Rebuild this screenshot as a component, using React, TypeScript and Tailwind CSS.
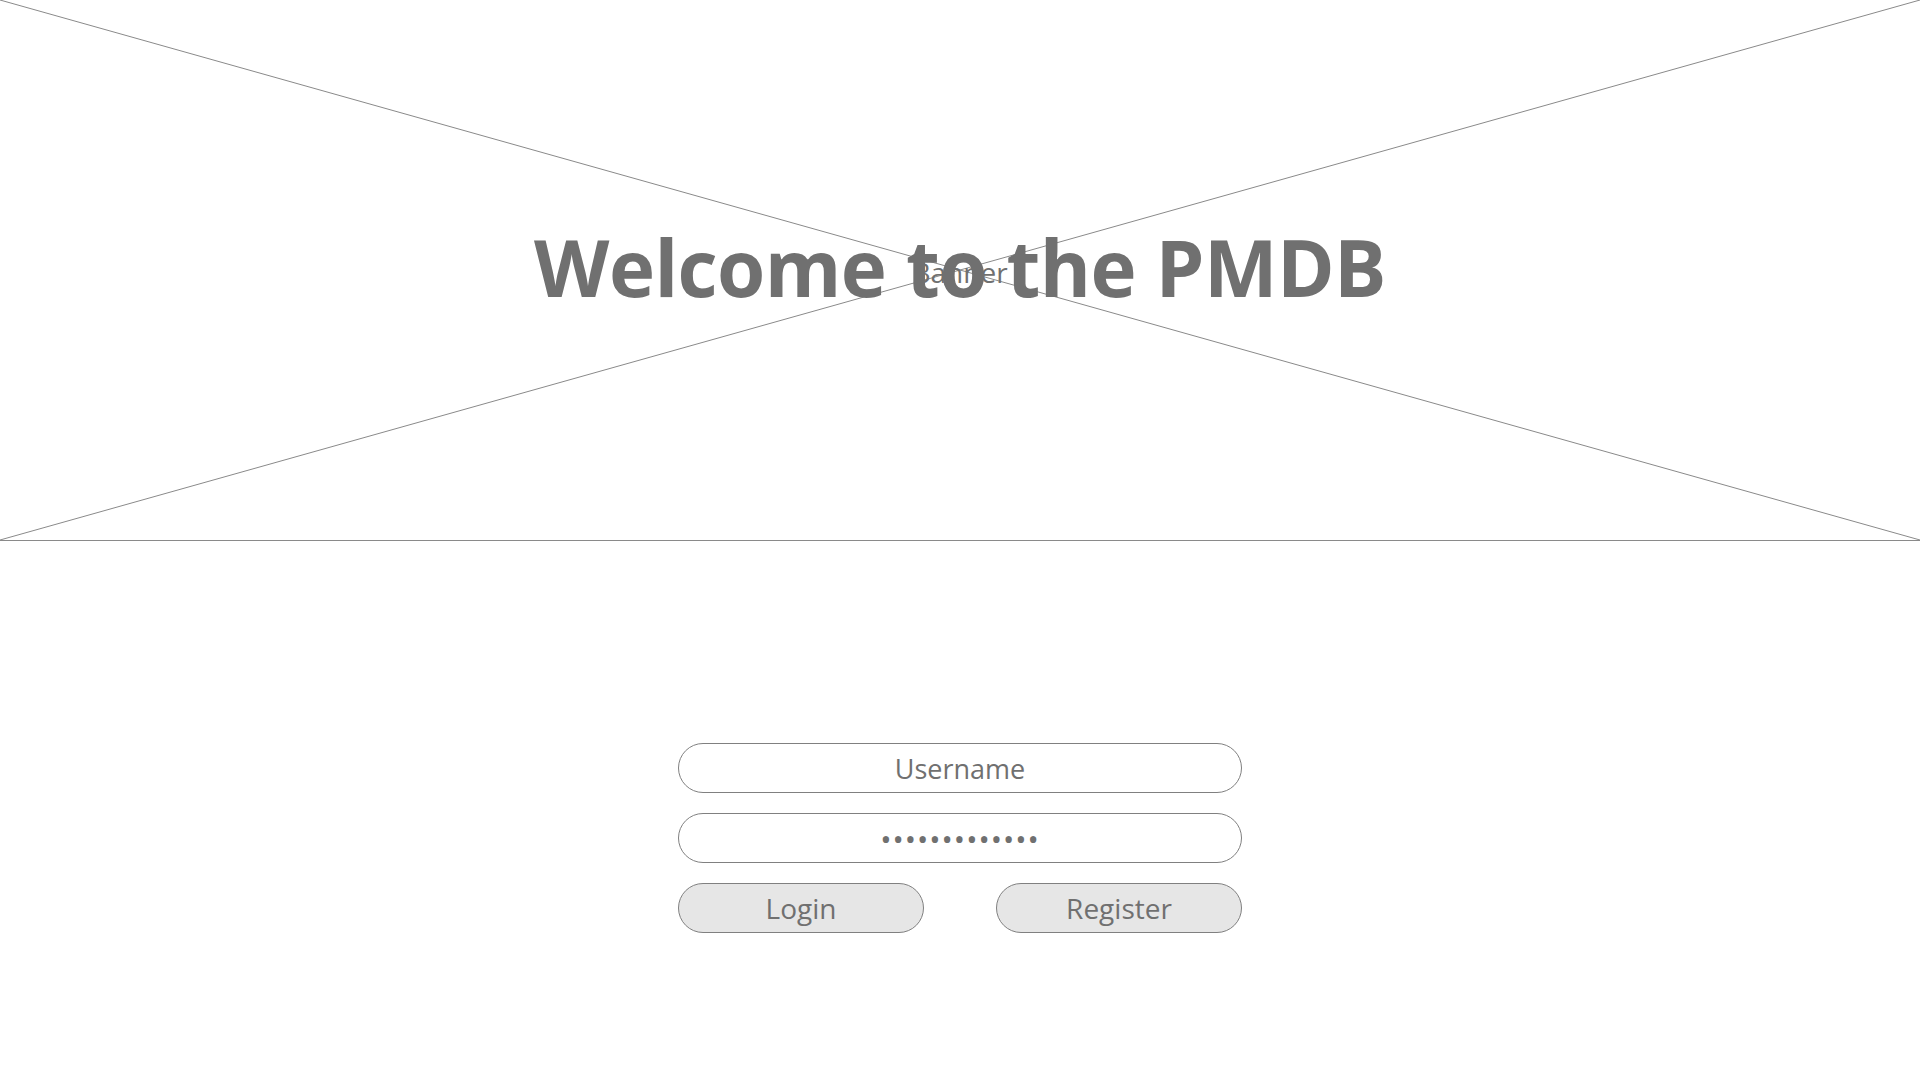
import React, { useState } from "react";

const Banner: React.FC = () => {
  return (
    <div className="relative h-[541px] w-full border-b border-[#8a8a8a]">
      {/* placeholder cross */}
      <svg
        className="absolute inset-0 h-full w-full"
        viewBox="0 0 1920 540"
        preserveAspectRatio="none"
      >
        <line x1="0" y1="0" x2="1920" y2="540" stroke="#8a8a8a" strokeWidth="1" />
        <line x1="1920" y1="0" x2="0" y2="540" stroke="#8a8a8a" strokeWidth="1" />
      </svg>
      <span className="absolute left-1/2 top-1/2 -translate-x-1/2 -translate-y-[42%] text-[28px] leading-none text-[#707070]">
        Banner
      </span>
      <div className="relative flex h-full items-center justify-center pb-[6px]">
        <h1 className="text-[78px] font-bold leading-none tracking-[-0.6px] text-[#707070]">
          Welcome to the PMDB
        </h1>
      </div>
    </div>
  );
};

const App: React.FC = () => {
  const [username, setUsername] = useState("");
  const [password, setPassword] = useState("password12345");

  return (
    <div
      className="min-h-screen w-full bg-white"
      style={{ fontFamily: '"Open Sans", "Noto Sans", sans-serif' }}
    >
      <Banner />
      <div className="mx-auto mt-[202px] flex w-[564px] flex-col gap-5">
        <input
          type="text"
          value={username}
          onChange={(e) => setUsername(e.target.value)}
          placeholder="Username"
          className="h-[50px] w-full rounded-full border border-[#808080] bg-white text-center text-[27px] text-[#707070] outline-none placeholder:text-[#707070]"
        />
        <input
          type="password"
          value={password}
          onChange={(e) => setPassword(e.target.value)}
          className="h-[50px] w-full rounded-full border border-[#808080] bg-white text-center text-[30px] tracking-[1px] text-[#707070] outline-none"
        />
        <div className="flex justify-between">
          <button className="h-[50px] w-[246px] rounded-full border border-[#808080] bg-[#e6e6e6] text-[28px] text-[#707070]">
            Login
          </button>
          <button className="h-[50px] w-[246px] rounded-full border border-[#808080] bg-[#e6e6e6] text-[28px] text-[#707070]">
            Register
          </button>
        </div>
      </div>
    </div>
  );
};

export default App;
